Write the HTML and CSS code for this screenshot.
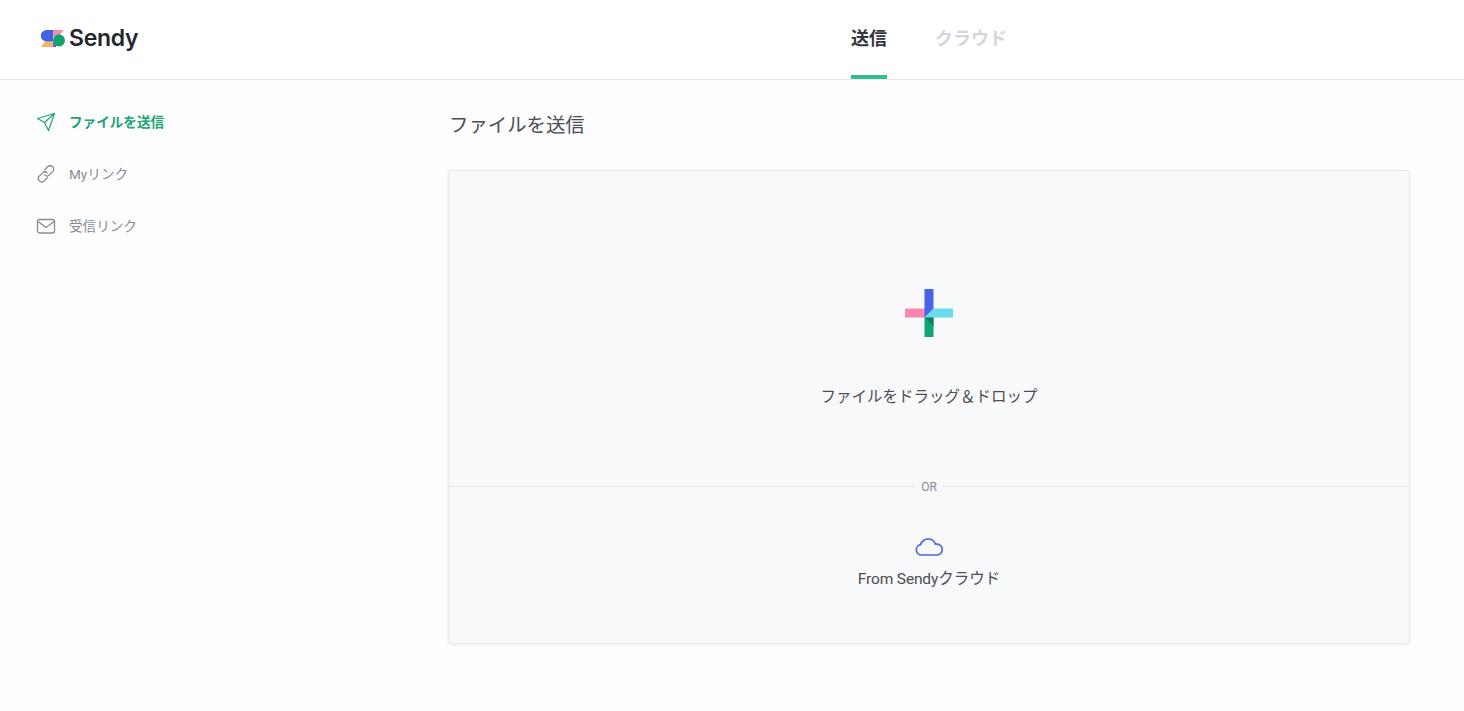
FILE: index.html
```html
<!DOCTYPE html>
<html lang="ja">
<head>
<meta charset="utf-8">
<title>Sendy</title>
<link rel="stylesheet" href="styles.css">
</head>
<body>
<header class="topbar">
  <a class="logo">
    <svg class="logo-mark" width="24" height="19" viewBox="0 0 24 19">
      <path d="M12 1h10.500L18 7.500H12z" fill="#f58ab0"/>
      <path d="M0 18 4 12.500h8.500L11 18z" fill="#f9b069"/>
      <path d="M11.500 18 12.500 12.500 15 15 15 18z" fill="#7a5fd0"/>
      <path d="M5.500 1H12V12.500H5.500a5.750 5.750 0 0 1 0-11.500z" fill="#3f63e6"/>
      <circle cx="18" cy="11.500" r="6" fill="#10a36f"/>
    </svg>
    <span class="logo-text">Sendy</span>
  </a>
  <nav class="tabs">
    <a class="tab tab-active">送信</a>
    <a class="tab">クラウド</a>
  </nav>
</header>
<div class="layout">
  <aside class="sidebar">
    <a class="side-item side-active">
      <svg class="side-icon" width="20" height="20" viewBox="0 0 20 20" fill="none" stroke="currentColor" stroke-width="1.200" stroke-linejoin="round"><path d="M1.500 6.500 18.500 1.500 12.500 18.500 8.500 10.500zM8.500 10.500 18.500 1.500"/></svg>
      <span>ファイルを送信</span>
    </a>
    <a class="side-item">
      <svg class="side-icon" width="20" height="20" viewBox="0 0 20 20" fill="none" stroke="currentColor" stroke-width="1.300" stroke-linecap="round"><path d="M8.500 6 11.700 2.800a3.400 3.400 0 0 1 5 4.800l-3.300 3.300a3.400 3.400 0 0 1-4.800 0"/><path d="M11.300 13.800 8 17a3.400 3.400 0 0 1-4.800-4.800l3.300-3.300a3.400 3.400 0 0 1 4.800 0"/></svg>
      <span>Myリンク</span>
    </a>
    <a class="side-item">
      <svg class="side-icon" width="20" height="20" viewBox="0 0 20 20" fill="none" stroke="currentColor" stroke-width="1.300" stroke-linejoin="round"><rect x="1.500" y="3.500" width="17" height="13.500" rx="2"/><path d="M2 5.500 10 11.500 18 5.500"/></svg>
      <span>受信リンク</span>
    </a>
  </aside>
  <main class="content">
    <h1 class="title">ファイルを送信</h1>
    <section class="card">
      <div class="drop">
        <svg class="plus" width="48" height="48" viewBox="0 0 48 48">
          <rect x="0" y="19.500" width="20" height="9" fill="#fb86ae"/>
          <rect x="19.500" y="0" width="9" height="20" fill="#4564e8"/>
          <rect x="19.500" y="28" width="9" height="20" fill="#10a574"/>
          <path d="M19.500 28 28.500 28 28.500 37z" fill="#0c7f5e"/>
          <path d="M19.500 28.500 28.500 19.500H48v9z" fill="#6bdcea"/>
          <path d="M19.500 28.500V19.500H28.500z" fill="#4564e8"/>
        </svg>
        <p class="drop-text">ファイルをドラッグ＆ドロップ</p>
      </div>
      <div class="divider"><span>OR</span></div>
      <div class="cloud">
        <svg width="30" height="20" viewBox="0 0 30 20" fill="none" stroke="#5069d9" stroke-width="1.700" stroke-linejoin="round"><path d="M7.500 18a5.200 5.200 0 0 1-1-10.300C7.700 4 11.500 1.600 15 2c3 .3 5.500 2.300 6.400 5.200.3 0 .6 0 .9 0A5.400 5.400 0 0 1 23.500 18z"/></svg>
        <p class="cloud-text"><span class="cloud-latin">From Sendy</span>クラウド</p>
      </div>
    </section>
  </main>
</div>
</body>
</html>
```
FILE: styles.css
```css
* { box-sizing: border-box; }
html, body { margin: 0; height: 100%; }
body {
  background: #fdfdfd;
  color: #4a4f57;
  font-family: Roboto, "Noto Sans CJK JP", sans-serif;
  overflow: hidden;
}
.topbar {
  height: 80px;
  background: #fff;
  border-bottom: 1px solid #e6e8eb;
  padding-left: 41px;
  display: flex;
  align-items: stretch;
}
.logo {
  width: 810px;
  display: flex;
  align-items: center;
  gap: 4px;
  padding-bottom: 3px;
}
.logo-text {
  font-family: Inter, sans-serif;
  font-size: 23px;
  font-weight: 600;
  color: #23272e;
  letter-spacing: -.3px;
}
.tabs { display: flex; gap: 48px; }
.tab {
  height: 79px;
  padding-top: 27px;
  font-size: 18px;
  line-height: 24px;
  font-weight: 700;
  color: #d3d6dc;
}
.tab-active {
  color: #33383f;
  border-bottom: 4px solid #2fbd93;
}
.layout { display: flex; }
.sidebar {
  width: 448px;
  padding: 31px 0 0 36px;
  display: flex;
  flex-direction: column;
  gap: 32px;
}
.side-item {
  height: 20px;
  display: flex;
  align-items: center;
  gap: 13px;
  font-size: 13.6px;
  color: #878c94;
  font-weight: 400;
}
.side-icon { margin-top: 2px; }
.side-active { color: #21a177; font-weight: 700; }
.content { width: 962px; }
.title {
  margin: 32px 0 30px 1px;
  font-size: 19.4px;
  line-height: 28px;
  font-weight: 400;
  color: #4a4f57;
}
.card {
  height: 474px;
  background: #f8f9fb;
  border: 1px solid #e8eaee;
  border-radius: 4px;
  box-shadow: 0 1px 3px rgba(0,0,0,.08);
  display: flex;
  flex-direction: column;
}
.drop {
  height: 315px;
  padding-top: 118px;
  display: flex;
  flex-direction: column;
  align-items: center;
}
.drop-text {
  margin: 49px 0 0;
  font-size: 15.5px;
  line-height: 22px;
  color: #4a4f57;
}
.divider {
  height: 1px;
  background: #e6e8ec;
  display: flex;
  justify-content: center;
  align-items: center;
}
.divider span {
  background: #f8f9fb;
  padding: 1px 6px 0;
  font-size: 12px;
  color: #878c94;
}
.cloud {
  padding-top: 50px;
  display: flex;
  flex-direction: column;
  align-items: center;
}
.cloud-text {
  margin: 11px 0 0;
  font-size: 15.5px;
  line-height: 22px;
  color: #4a4f57;
}
.cloud-latin { letter-spacing: -.15px; }
```
